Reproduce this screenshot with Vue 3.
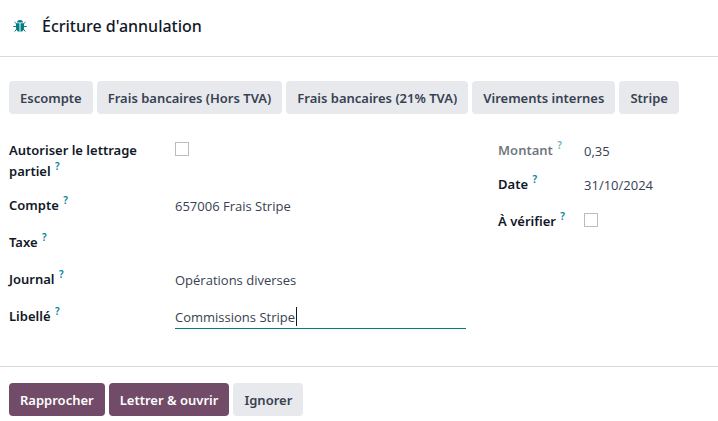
<script setup>
import { ref, onMounted } from 'vue'

const models = [
  'Escompte',
  'Frais bancaires (Hors TVA)',
  'Frais bancaires (21% TVA)',
  'Virements internes',
  'Stripe',
]
const partial = ref(false)
const toCheck = ref(false)
const account = ref('657006 Frais Stripe')
const tax = ref('')
const journal = ref('Opérations diverses')
const label = ref('Commissions Stripe')
const amount = ref('0,35')
const date = ref('31/10/2024')
const labelInput = ref(null)

onMounted(() => {
  labelInput.value.focus()
  labelInput.value.setSelectionRange(label.value.length, label.value.length)
})
</script>

<template>
  <main class="dialog">
    <header class="head">
      <svg class="bug" viewBox="0 0 14 14" aria-hidden="true">
        <path d="M4 3.500C4 1.800 5.300 1 7 1s3 .8 3 2.500z" fill="#017e84" />
        <path d="M3 4.200H6.500V12.800C4.700 12.600 3 11.300 3 9zM7.500 4.200H11V9C11 11.300 9.300 12.600 7.500 12.800z" fill="#017e84" />
        <path d="M1.500 3L3.900 5.200M12.500 3L10.100 5.200M.3 7.500H3.500M10.500 7.500H13.700M3.900 9.800L1.700 12.500M10.100 9.800L12.300 12.500" fill="none" stroke="#017e84" stroke-width="1" />
      </svg>
      <h1>Écriture d'annulation</h1>
    </header>

    <div class="body">
      <div class="buttons">
        <button v-for="m in models" :key="m" type="button" class="btn">{{ m }}</button>
      </div>

      <form class="groups" @submit.prevent>
        <div class="group">
          <div class="row tall">
            <label for="partial">Autoriser le lettrage partiel <sup>?</sup></label>
            <input id="partial" v-model="partial" type="checkbox" />
          </div>
          <div class="row">
            <label for="account">Compte <sup>?</sup></label>
            <input id="account" v-model="account" type="text" />
          </div>
          <div class="row">
            <label for="tax">Taxe <sup>?</sup></label>
            <input id="tax" v-model="tax" type="text" />
          </div>
          <div class="row">
            <label for="journal">Journal <sup>?</sup></label>
            <input id="journal" v-model="journal" type="text" />
          </div>
          <div class="row">
            <label for="label">Libellé <sup>?</sup></label>
            <div class="field">
              <input id="label" ref="labelInput" v-model="label" class="active" type="text" />
              <span class="caret"></span>
            </div>
          </div>
        </div>

        <div class="group side">
          <div class="row short">
            <label for="amount" class="muted">Montant <sup>?</sup></label>
            <input id="amount" v-model="amount" type="text" readonly />
          </div>
          <div class="row">
            <label for="date">Date <sup>?</sup></label>
            <input id="date" v-model="date" type="text" />
          </div>
          <div class="row">
            <label for="check">À vérifier <sup>?</sup></label>
            <input id="check" v-model="toCheck" type="checkbox" />
          </div>
        </div>
      </form>
    </div>

    <footer class="foot buttons">
      <button type="button" class="btn primary">Rapprocher</button>
      <button type="button" class="btn primary">Lettrer &amp; ouvrir</button>
      <button type="button" class="btn">Ignorer</button>
    </footer>
  </main>
</template>

<style>
body {
  background: #fff;
}
</style>

<style scoped>
.dialog {
  font-family: "Open Sans", "Noto Sans", sans-serif;
  font-size: 13px;
  line-height: 21px;
  color: #374151;
}
.head {
  display: flex;
  align-items: center;
  gap: 15px;
  padding: 12px 13px 16px;
  border-bottom: 1px solid #d8dadd;
}
.bug {
  width: 14px;
  height: 14px;
}
h1 {
  margin: 0;
  font-family: "Noto Sans", "Open Sans", sans-serif;
  font-size: 16px;
  line-height: 28px;
  font-weight: 500;
  color: #111827;
}
.body {
  padding: 24px 9px 24px;
}
.buttons {
  display: flex;
  flex-wrap: wrap;
  gap: 4px;
}
.btn {
  padding: 7px 11px 5px;
  border: 0;
  border-radius: 4px;
  background: #e7e9ed;
  color: #374151;
  font: inherit;
  font-family: "Noto Sans", "Open Sans", sans-serif;
  font-weight: 600;
}
.btn.primary {
  background: #714b67;
  color: #fff;
}
.groups {
  display: grid;
  grid-template-columns: minmax(0, 13fr) minmax(0, 6fr);
  gap: 32px;
  margin-top: 25px;
}
.row {
  display: grid;
  grid-template-columns: 150px minmax(0, 1fr);
  column-gap: 16px;
  align-items: start;
  min-height: 37px;
}
.side .row {
  grid-template-columns: 70px minmax(0, 1fr);
}
.row.tall {
  min-height: 55px;
}
.row.short {
  min-height: 34px;
}
label {
  padding-top: 1px;
  color: #111827;
  font-family: "Noto Sans", "Open Sans", sans-serif;
  font-weight: 600;
}
label.muted {
  opacity: 0.6;
}
sup {
  margin-left: 1px;
  font-size: 10px;
  line-height: 0;
  vertical-align: 6px;
  color: #0180a5;
}
input[type="text"] {
  display: block;
  width: 100%;
  box-sizing: border-box;
  padding: 2px 0 0;
  border: 0;
  border-bottom: 1px solid transparent;
  outline: 0;
  background: transparent;
  color: #374151;
  font: inherit;
  line-height: 21px;
}
input.active {
  border-bottom-color: #017e84;
  caret-color: transparent;
}
.field {
  position: relative;
}
.caret {
  position: absolute;
  top: 2px;
  left: 121px;
  width: 1px;
  height: 19px;
  background: #111827;
}
input[type="checkbox"] {
  appearance: none;
  width: 14px;
  height: 14px;
  margin: 3px 0 0;
  border: 1px solid #b9bcc1;
  background: #fff;
}
.foot {
  padding: 16px 9px 5px;
  border-top: 1px solid #d8dadd;
}
</style>
